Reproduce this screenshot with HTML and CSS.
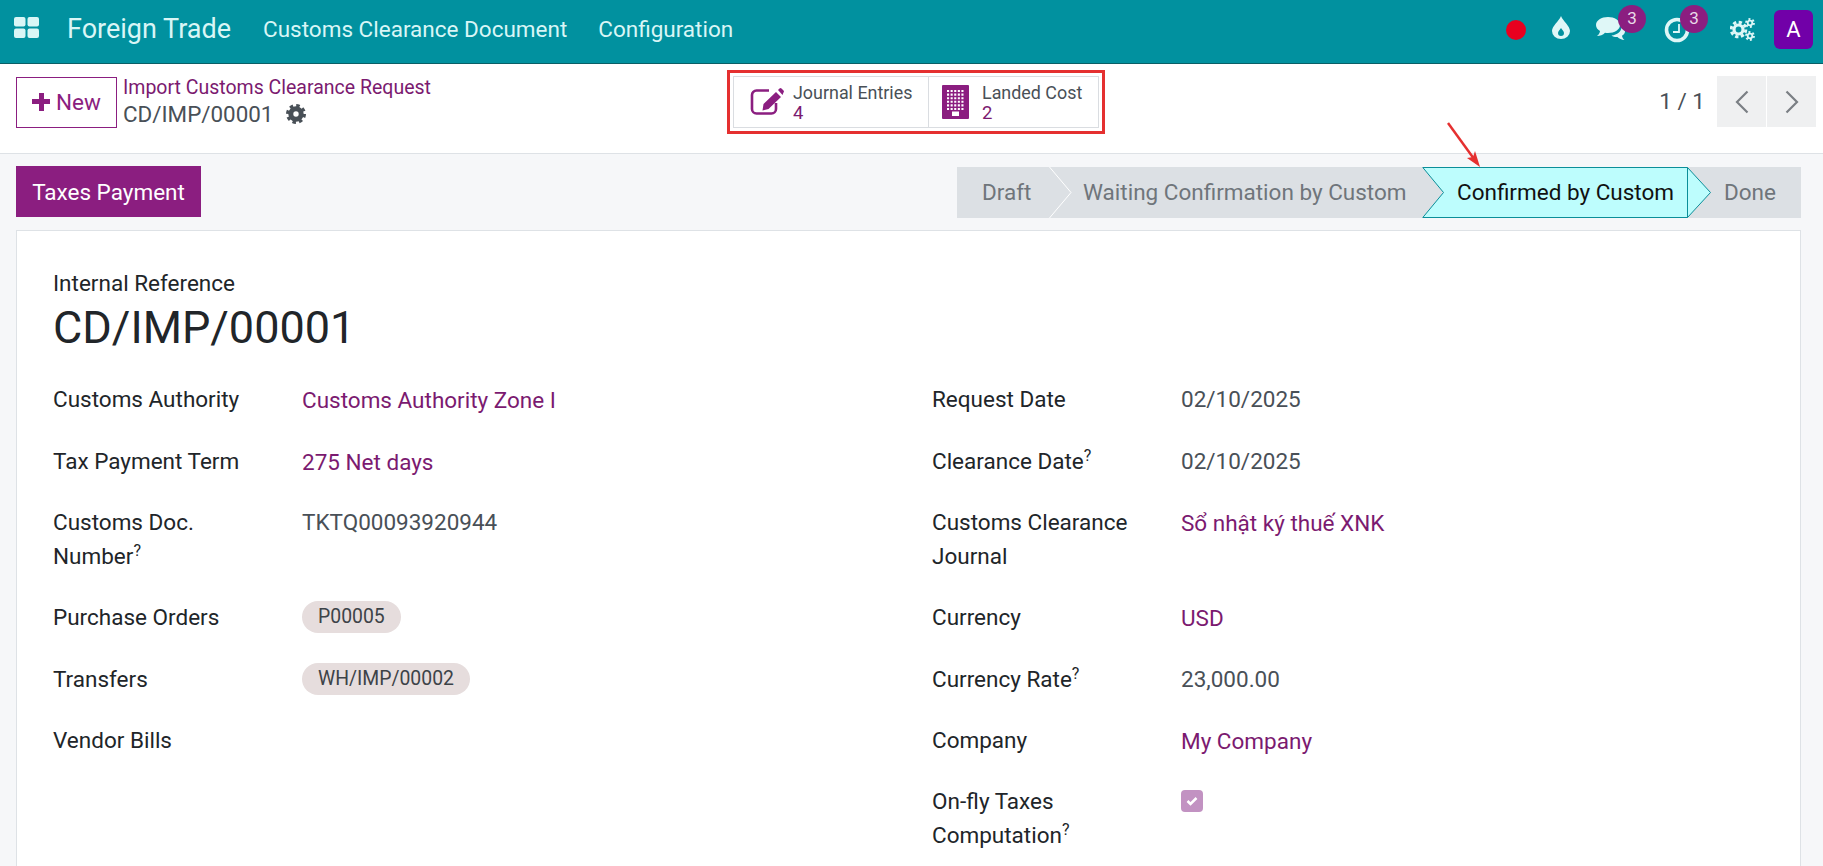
FILE: index.html
```html
<!DOCTYPE html>
<html lang="en">
<head>
    <meta charset="UTF-8">
    <title>CD/IMP/00001</title>
    <link rel="stylesheet" href="styles.css">
</head>
<body>
    <header class="navbar">
        <svg class="apps-icon" viewBox="0 0 25 21"><rect x="0" y="0" width="11.5" height="9.5" rx="2"/><rect x="13.5" y="0" width="11.5" height="9.5" rx="2"/><rect x="0" y="11.5" width="11.5" height="9.5" rx="2"/><rect x="13.5" y="11.5" width="11.5" height="9.5" rx="2"/></svg>
        <span class="brand">Foreign Trade</span>
        <a class="nav-item">Customs Clearance Document</a>
        <a class="nav-item">Configuration</a>
        <div class="systray">
            <span class="rec-dot"></span>
            <svg class="tray-drop" viewBox="0 0 18 23"><path fill-rule="evenodd" d="M9 0C11 5 18 10 18 15a9 8 0 0 1-18 0C0 10 7 5 9 0ZM9 12c-1 2-3 3-3 5a3 3 0 0 0 6 0c0-2-2-3-3-5Z"/></svg>
            <span class="tray-badged tray-chat">
                <svg viewBox="0 0 29 24"><path d="M12 0c6.600 0 12 3.500 12 8s-5.400 8-12 8c-1 0-2 0-3-.2C7 18 4 19 1 19c1.500-1 2.800-3 3-5C1.500 12.500 0 10.500 0 8 0 3.500 5.400 0 12 0Z"/><path d="M25.500 9.500C27.800 10.800 29 12.300 29 14.200c0 1.800-1 3.300-3 4.500.2 1.800 1.300 3.300 2.500 4.300-2.800-.2-5.300-1.200-7-3-2 .2-4.500-.3-6-1.500 5.500-.5 10.200-4 10-9Z"/></svg>
                <span class="badge">3</span>
            </span>
            <span class="tray-badged tray-clock">
                <svg viewBox="0 0 26 26"><circle class="clock-ring" cx="13" cy="13" r="10.500"/><path class="clock-hands" d="M15 7v8H9"/></svg>
                <span class="badge">3</span>
            </span>
            <svg class="tray-gears" viewBox="0 0 25 23">
                <circle class="gear-ring" cx="8.500" cy="11.500" r="4.500"/>
                <circle class="gear-teeth" cx="8.500" cy="11.500" r="7.300"/>
                <circle class="gear-ring small" cx="20" cy="5" r="2.300"/>
                <circle class="gear-teeth small" cx="20" cy="5" r="4"/>
                <circle class="gear-ring small" cx="20" cy="18" r="2.300"/>
                <circle class="gear-teeth small" cx="20" cy="18" r="4"/>
            </svg>
            <span class="avatar">A</span>
        </div>
    </header>

    <div class="control-panel">
        <div class="cp-left">
            <button class="btn-new"><span class="plus"></span>New</button>
            <div class="breadcrumb">
                <a>Import Customs Clearance Request</a>
                <div class="crumb-current">CD/IMP/00001
                    <svg class="crumb-gear" viewBox="0 0 20 20">
                        <circle class="gear-ring" cx="10" cy="10" r="5.200"/>
                        <circle class="gear-teeth" cx="10" cy="10" r="8.500"/>
                    </svg>
                </div>
            </div>
        </div>
        <div class="stat-frame">
            <div class="stat-buttons">
                <div class="stat-button">
                    <svg class="stat-icon" viewBox="0 0 34 30">
                        <path class="pen-box" d="M19 3.500H6.500A4.500 4.500 0 0 0 2 8v14a4.500 4.500 0 0 0 4.500 4.500h15A4.500 4.500 0 0 0 26 22v-6"/>
                        <path d="M26 5l5 5-12.500 12-6 1.500 1-6.500ZM28 3l1.500-1.500a1.500 1.500 0 0 1 2 0l2 2a1.500 1.500 0 0 1 0 2L32.500 8Z"/>
                    </svg>
                    <div class="stat-text"><span>Journal Entries</span><b>4</b></div>
                </div>
                <div class="stat-button">
                    <svg class="stat-icon building" viewBox="0 0 27 34">
                        <path fill-rule="evenodd" d="M1 0h25a1 1 0 0 1 1 1v32a1 1 0 0 1-1 1H1a1 1 0 0 1-1-1V1a1 1 0 0 1 1-1Zm9 26.500V31h7v-4.500Z"/>
                        <path class="windows" d="M5 6H22.500M5 9.600H22.500M5 13.200H22.500M5 16.800H22.500M5 20.400H22.500M5 24H22.500"/>
                    </svg>
                    <div class="stat-text"><span>Landed Cost</span><b>2</b></div>
                </div>
            </div>
        </div>
        <div class="pager">
            <span class="pager-count">1 / 1</span>
            <button class="pager-btn"><svg viewBox="0 0 14 24"><path d="M12.500 1.500 2 12l10.500 10.500"/></svg></button>
            <button class="pager-btn"><svg viewBox="0 0 14 24"><path d="M1.500 1.500 12 12 1.500 22.500"/></svg></button>
        </div>
    </div>

    <main class="content">
        <!-- red annotation arrow on the screenshot -->
        <svg class="annotation-arrow" viewBox="0 0 34 46"><path d="M1 1 30 41"/><path class="tip" d="M33 45 20 36l6-1 2-6Z"/></svg>

        <div class="statusbar-row">
            <button class="btn-primary">Taxes Payment</button>
            <div class="statusbar">
                <span class="step step-draft">Draft
                    <svg class="step-sep" viewBox="0 0 23 51"><path d="M0.500 0 22 25.500 0.500 51"/></svg>
                </span>
                <span class="step step-waiting">Waiting Confirmation by Custom</span>
                <span class="step step-active">
                    <svg class="active-shape" viewBox="0 0 290 51" preserveAspectRatio="none"><path d="M.800.500H265.500L288.500 25.500 265.500 50.500H.800L21.500 25.500Z"/><path d="M265.500.500V50.500"/></svg>
                    <span class="step-label">Confirmed by Custom</span>
                </span>
                <span class="step step-done">Done</span>
            </div>
        </div>

        <section class="sheet">
            <div class="ref-label">Internal Reference</div>
            <h1>CD/IMP/00001</h1>
            <div class="form-cols">
                <div class="form-col">
                    <div class="field"><label>Customs Authority</label><a>Customs Authority Zone I</a></div>
                    <div class="field"><label>Tax Payment Term</label><a>275 Net days</a></div>
                    <div class="field"><label>Customs Doc. Number<sup>?</sup></label><span>TKTQ00093920944</span></div>
                    <div class="field"><label>Purchase Orders</label><span class="tag">P00005</span></div>
                    <div class="field"><label>Transfers</label><span class="tag">WH/IMP/00002</span></div>
                    <div class="field"><label>Vendor Bills</label><span></span></div>
                </div>
                <div class="form-col">
                    <div class="field"><label>Request Date</label><span>02/10/2025</span></div>
                    <div class="field"><label>Clearance Date<sup>?</sup></label><span>02/10/2025</span></div>
                    <div class="field"><label>Customs Clearance Journal</label><a>Sổ nhật ký thuế XNK</a></div>
                    <div class="field"><label>Currency</label><a>USD</a></div>
                    <div class="field"><label>Currency Rate<sup>?</sup></label><span>23,000.00</span></div>
                    <div class="field"><label>Company</label><a>My Company</a></div>
                    <div class="field"><label>On-fly Taxes Computation<sup>?</sup></label>
                        <span class="checkbox"><svg viewBox="0 0 12 10"><path d="M1.500 5 4.500 8 10.500 2"/></svg></span>
                    </div>
                </div>
            </div>
        </section>
    </main>
</body>
</html>
```

FILE: styles.css
```css
html, body {
    margin: 0;
    height: 100%;
    overflow: hidden;
}
body {
    font-family: Roboto, sans-serif;
    font-size: 22.5px;
    color: #212529;
    background-color: #f6f7f9;
}
a {
    color: #7b1a70;
}
button {
    font-family: inherit;
    cursor: pointer;
}

/* top bar */
.navbar {
    display: flex;
    align-items: center;
    height: 59px;
    padding: 0 0 4px 14px;
    background-color: #01919f;
    border-bottom: 1px solid #0a5f66;
    color: #d9f6f6;
}
.apps-icon {
    width: 25px;
    height: 21px;
    margin-top: -5px;
    fill: #d9f6f6;
}
.brand {
    margin: 0 0 2px 28px;
    font-size: 27px;
}
.nav-item {
    color: #d9f6f6;
    margin: 0 0 2px 31px;
}
.brand + .nav-item {
    margin-left: 32px;
}
.systray {
    display: flex;
    align-items: center;
    margin-left: auto;
    height: 100%;
    padding-right: 10px;
}
.systray svg {
    fill: #dff7f7;
}
.rec-dot {
    width: 20px;
    height: 20px;
    border-radius: 50%;
    background-color: #e8001f;
    margin-right: 26px;
}
.tray-drop {
    width: 18px;
    height: 23px;
    margin-top: -4px;
    margin-right: 26px;
}
.tray-badged {
    position: relative;
    display: block;
    margin-top: -2px;
}
.tray-badged svg {
    display: block;
}
.tray-chat {
    width: 29px;
    height: 24px;
    margin-right: 39px;
}
.tray-clock {
    width: 26px;
    height: 26px;
    margin-top: 0;
    margin-right: 40px;
}
.clock-ring {
    fill: none;
    stroke: #dff7f7;
    stroke-width: 3.600;
}
.clock-hands {
    fill: none;
    stroke: #dff7f7;
    stroke-width: 1.800;
}
.badge {
    position: absolute;
    width: 28px;
    height: 28px;
    border-radius: 50%;
    background-color: #8b1e80;
    color: #e9dbe8;
    font-size: 17px;
    line-height: 27px;
    text-align: center;
}
.tray-clock .badge {
    top: -12px;
    right: -18px;
}
.tray-chat .badge {
    top: -12px;
    right: -21px;
}
.tray-gears {
    width: 25px;
    height: 23px;
    margin-right: 19px;
}
.gear-ring {
    fill: none;
    stroke: #dff7f7;
    stroke-width: 3.2;
}
.gear-teeth {
    fill: none;
    stroke: #dff7f7;
    stroke-width: 3;
    stroke-dasharray: 3.300 2.430;
}
.gear-ring.small {
    stroke-width: 1.800;
}
.gear-teeth.small {
    stroke-width: 1.800;
    stroke-dasharray: 2 2.190;
}
.avatar {
    width: 39px;
    height: 39px;
    border-radius: 6px;
    background-color: #7100a8;
    color: #fff;
    font-size: 22px;
    line-height: 39px;
    text-align: center;
}

/* control panel */
.control-panel {
    display: flex;
    align-items: flex-start;
    height: 89px;
    padding: 0 7px 0 16px;
    background-color: #fff;
    border-bottom: 1px solid #dee2e6;
}
.cp-left {
    display: flex;
    width: 711px;
    padding-top: 13px;
}
.btn-new {
    display: flex;
    align-items: center;
    justify-content: center;
    width: 101px;
    height: 51px;
    padding: 0 0 2px;
    background-color: #fff;
    border: 1px solid #8b1e80;
    color: #8b1e80;
    font-size: 22.5px;
}
.plus {
    position: relative;
    width: 18px;
    height: 18px;
    margin-right: 6px;
    background:
        linear-gradient(#8b1e80, #8b1e80) center / 18px 5px no-repeat,
        linear-gradient(#8b1e80, #8b1e80) center / 5px 18px no-repeat;
    border-radius: 1px;
}
.breadcrumb {
    margin-left: 6px;
    margin-top: -3px;
}
.breadcrumb a {
    display: block;
    font-size: 19.500px;
    line-height: 27px;
    color: #7b1a70;
}
.crumb-current {
    display: flex;
    align-items: center;
    font-size: 22.4px;
    line-height: 27px;
    color: #495057;
}
.crumb-gear {
    width: 20px;
    height: 20px;
    margin: -2px 0 0 13px;
}
.crumb-gear .gear-ring {
    stroke: #495057;
    stroke-width: 5;
}
.crumb-gear .gear-teeth {
    stroke: #495057;
    stroke-dasharray: 3.500 3.170;
}
.stat-frame {
    margin-top: 6px;
    padding: 3px;
    border: 3px solid #e53030;
}
.stat-buttons {
    display: flex;
    height: 50px;
    border: 1px solid #dadde1;
}
.stat-button {
    display: flex;
    align-items: center;
    width: 194px;
    padding-left: 16px;
    box-sizing: border-box;
}
.stat-button + .stat-button {
    width: 170px;
    padding-left: 13px;
    border-left: 1px solid #dadde1;
}
.stat-icon {
    flex: none;
    width: 34px;
    height: 30px;
    fill: #8b1e80;
}
.stat-icon.building {
    width: 27px;
    height: 34px;
}
.pen-box {
    fill: none;
    stroke: #8b1e80;
    stroke-width: 2.600;
}
.windows {
    fill: none;
    stroke: #fff;
    stroke-width: 2.100;
    stroke-dasharray: 2.100 1.500;
}
.stat-text {
    display: flex;
    flex-direction: column;
    margin-left: 9px;
    padding-top: 2px;
    font-size: 17.900px;
    line-height: 20px;
    color: #495057;
}
.building + .stat-text {
    margin-left: 13px;
}
.stat-text b {
    font-weight: 400;
    font-size: 18.500px;
    color: #7b1a70;
}
.pager {
    display: flex;
    align-items: center;
    margin-left: auto;
    margin-top: 12px;
    gap: 1px;
}
.pager-count {
    margin: 0 11px 2px 0;
    color: #495057;
}
.pager-btn {
    display: flex;
    align-items: center;
    justify-content: center;
    width: 49px;
    height: 51px;
    padding: 0;
    border: none;
    background-color: #eff0f1;
}
.pager-btn svg {
    width: 14px;
    height: 24px;
    fill: none;
    stroke: #7a7f84;
    stroke-width: 2.200;
}

/* main area */
.content {
    position: relative;
    padding: 12px 22px 0 16px;
}
.annotation-arrow {
    position: absolute;
    left: 1447px;
    top: -32px;
    width: 34px;
    height: 46px;
    fill: none;
    stroke: #e53030;
    stroke-width: 2.500;
}
.annotation-arrow .tip {
    fill: #e53030;
    stroke: none;
}
.statusbar-row {
    display: flex;
    justify-content: space-between;
    height: 51px;
}
.btn-primary {
    width: 185px;
    padding: 0;
    border: none;
    background-color: #8b1e80;
    color: #fff;
    font-size: 22.5px;
}
.statusbar {
    display: flex;
    width: 844px;
    height: 51px;
    margin-top: 1px;
    background-color: #dce0e4;
    color: #6f757b;
    line-height: 51px;
}
.step {
    position: relative;
    display: block;
    white-space: nowrap;
}
.step-draft {
    width: 126px;
    padding-left: 25px;
    box-sizing: border-box;
}
.step-waiting {
    width: 339px;
    box-sizing: border-box;
}
.step-sep {
    position: absolute;
    left: 92px;
    top: 0;
    width: 23px;
    height: 51px;
    fill: none;
    stroke: #fff;
    stroke-width: 1;
}
.step-active {
    width: 0;
    color: #111;
}
.active-shape {
    position: absolute;
    left: 0;
    top: 0;
    width: 290px;
    height: 51px;
    fill: #bdfdfd;
    stroke: #0b8e99;
    stroke-width: 1;
}
.step-label {
    position: absolute;
    left: 35px;
    top: 0;
}
.step-done {
    margin-left: 302px;
}

/* form sheet */
.sheet {
    box-sizing: border-box;
    height: 636px;
    margin-top: 13px;
    padding: 37px 36px 0;
    background-color: #fff;
    border: 1px solid #dee2e6;
    border-bottom: none;
}
.ref-label {
    line-height: 30px;
}
h1 {
    margin: 1px 0 25.400px;
    font-size: 45px;
    font-weight: 400;
    line-height: 58px;
    color: #212529;
}
.form-cols {
    display: grid;
    grid-template-columns: 879px 1fr;
}
.field {
    display: grid;
    grid-template-columns: 249px 1fr;
    align-items: start;
    margin-bottom: 27.300px;
    line-height: 34px;
    color: #495057;
}
.field:last-child {
    margin-bottom: 0;
}
.field label {
    color: #212529;
    padding-right: 40px;
}
.field a {
    margin: 1px 0 -1px;
}
sup {
    font-size: 16px;
    line-height: 0;
}
.tag {
    justify-self: start;
    margin-top: 1px;
    padding: 0 16px;
    border-radius: 17px;
    background-color: #e6dddd;
    color: #3d4348;
    font-size: 19.400px;
    line-height: 32px;
}
.checkbox {
    display: flex;
    align-items: center;
    justify-content: center;
    width: 22px;
    height: 22px;
    margin-top: 6px;
    border-radius: 4px;
    background-color: #c292c2;
}
.checkbox svg {
    width: 12px;
    height: 10px;
    fill: none;
    stroke: #fff;
    stroke-width: 2.500;
}
```
